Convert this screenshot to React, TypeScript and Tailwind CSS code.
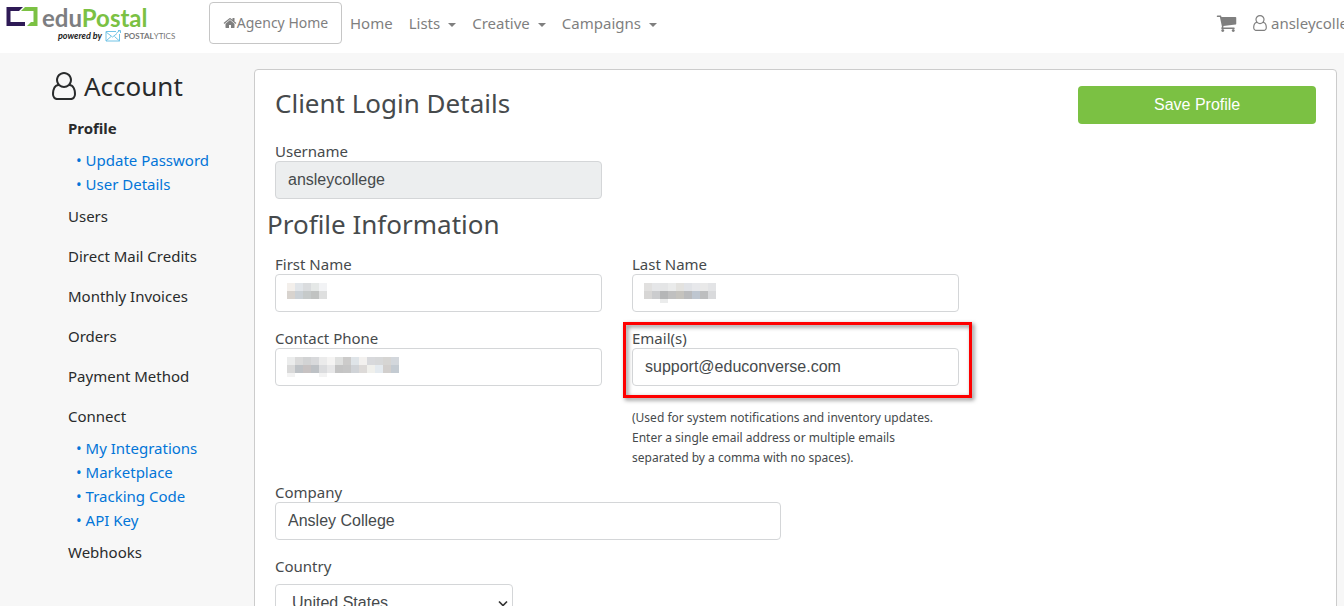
import React, { useState } from 'react';

const HomeIcon = ({ className }: { className?: string }) => (
  <svg className={className} viewBox="0 0 1792 1792" fill="currentColor" aria-hidden="true">
    <path d="M1472 992v480q0 26-19 45t-45 19h-384v-384h-256v384h-384q-26 0-45-19t-19-45v-480q0-1 .5-3t.5-3l575-474 575 474q1 2 1 6zm223-69l-62 74q-8 9-21 11h-3q-13 0-21-7l-692-577-692 577q-12 8-24 7-13-2-21-11l-62-74q-8-10-7-23.5t11-21.5l719-599q32-26 76-26t76 26l244 204v-195q0-14 9-23t23-9h192q14 0 23 9t9 23v408l219 182q10 8 11 21.5t-7 23.5z" />
  </svg>
);

const CartIcon = ({ className }: { className?: string }) => (
  <svg className={className} viewBox="64 128 1664 1536" fill="currentColor" aria-hidden="true">
    <path d="M704 1536q0 52-38 90t-90 38-90-38-38-90 38-90 90-38 90 38 38 90zm896 0q0 52-38 90t-90 38-90-38-38-90 38-90 90-38 90 38 38 90zm128-1088v512q0 24-16.5 42.5t-40.5 21.5l-1044 122q13 60 13 70 0 16-24 64h920q26 0 45 19t19 45-19 45-45 19h-1024q-26 0-45-19t-19-45q0-11 8-31.5t16-36 21.5-40 15.5-29.5l-177-823h-204q-26 0-45-19t-19-45 19-45 45-19h256q16 0 28.5 6.5t19.5 15.5 13 24.5 8 26 5.5 29.5 4.5 26h1201q26 0 45 19t19 45z" />
  </svg>
);

const UserIcon = ({ className }: { className?: string }) => (
  <svg className={className} viewBox="0 0 1536 1792" fill="currentColor" aria-hidden="true">
    <path d="M1201 784q47 14 89.5 38t89 79.5 79.5 115.5 55 172 22 236.5q0 154-100 263.5t-241 109.5h-854q-141 0-241-109.5t-100-263.5q0-131 22-236.5t55-172 79.5-115.5 89-79.5 89.5-38q-79-125-79-272 0-104 40.5-198.5t109.5-163.5 163.5-109.5 198.5-40.5 198.5 40.5 163.5 109.5 109.5 163.5 40.5 198.5q0 147-79 272zm-433-656q-159 0-271.5 112.5t-112.5 271.5 112.5 271.5 271.5 112.5 271.5-112.5 112.5-271.5-112.5-271.5-271.5-112.5zm427 1536q88 0 150.5-71.5t62.5-173.5q0-239-78.5-377t-225.5-145q-145 127-336 127t-336-127q-147 7-225.5 145t-78.5 377q0 102 62.5 173.5t150.5 71.5h854z" />
  </svg>
);

const Logo = () => (
  <a href="#" className="flex w-[202px] shrink-0 gap-1 pt-[6px] pl-[6px]">
    <svg className="h-[21px] w-8 shrink-0" viewBox="0 0 32 21" aria-hidden="true">
      <path d="M0.500 1H17L13 5H4.500V16H19V20H0.500Z" fill="#2e1a56" />
      <path d="M19 1H31.500V20H21L25 16H27.500V5H15Z" fill="#7bc143" />
    </svg>
    <span className="flex flex-col">
      <span className="font-[Lato,sans-serif] text-2xl leading-6 font-bold text-[#7d7e81]">
        edu<span className="text-[#7bc143]">Postal</span>
      </span>
      <span className="flex items-center gap-[3px] pl-4 leading-3 whitespace-nowrap">
        <span className="font-[Lato,sans-serif] text-[9px] font-bold text-[#222222] italic">powered by</span>
        <svg className="h-3 w-4 shrink-0" viewBox="0 0 16 12" fill="none" stroke="#72c4e6" aria-hidden="true">
          <path d="M11 1.500H1V11H14.500V4M1 2L7.500 7L12 3.500M1 11L6 6.500M14.500 11L9.500 6.500" />
          <path d="M11.500 3L15 0.500M13 0.500H15.500V3" />
        </svg>
        <span className="font-[Lato,sans-serif] text-[8px] text-[#777777]">
          <b>POSTAL</b>YTICS
        </span>
      </span>
    </span>
  </a>
);

const NAV_MENUS = ['Lists', 'Creative', 'Campaigns'];

const Header = () => (
  <header className="flex h-[53px] shrink-0 items-start overflow-hidden bg-white text-[15px] text-[#7f7f7f]">
    <Logo />
    <nav className="flex items-center gap-4 pt-[2px] pl-[7px]">
      <div className="flex items-center gap-2">
        <a href="#" className="flex h-[42px] w-[133px] items-center justify-center rounded border border-[#c6c6c6] text-sm">
          <HomeIcon className="h-[14px] w-[14px]" />
          Agency Home
        </a>
        <a href="#">Home</a>
      </div>
      {NAV_MENUS.map((menu) => (
        <button key={menu} type="button" className="flex items-center gap-2">
          {menu}
          <span className="mt-1 border-x-4 border-t-4 border-x-transparent border-t-current" />
        </button>
      ))}
    </nav>
    <div className="ml-auto flex h-[46px] w-32 items-center gap-4 overflow-hidden whitespace-nowrap">
      <a href="#" aria-label="Cart" className="shrink-0">
        <CartIcon className="h-[18px] w-[21px]" />
      </a>
      <a href="#" className="flex shrink-0 items-center gap-1">
        <UserIcon className="h-4 w-[14px]" />
        ansleycollege
      </a>
    </div>
  </header>
);

interface MenuItem {
  label: string;
  active?: boolean;
  children?: string[];
}

const MENU: MenuItem[] = [
  { label: 'Profile', active: true, children: ['Update Password', 'User Details'] },
  { label: 'Users' },
  { label: 'Direct Mail Credits' },
  { label: 'Monthly Invoices' },
  { label: 'Orders' },
  { label: 'Payment Method' },
  { label: 'Connect', children: ['My Integrations', 'Marketplace', 'Tracking Code', 'API Key'] },
  { label: 'Webhooks' },
];

const Sidebar = () => (
  <aside className="w-[254px] shrink-0 pt-4 text-[15px] leading-6 text-[#292b2c]">
    <h2 className="flex items-center gap-2 pl-[52px] text-[26px] leading-[34px]">
      <UserIcon className="h-7 w-6" />
      Account
    </h2>
    <ul className="flex flex-col gap-4 pt-[13px] pl-[68px]">
      {MENU.map((item) => (
        <li key={item.label} className={item.children ? '-mb-2' : ''}>
          <a href="#" className={item.active ? 'font-bold' : ''}>
            {item.label}
          </a>
          {item.children && (
            <ul className="pt-2 pl-2 text-[#0275d8]">
              {item.children.map((child) => (
                <li key={child}>
                  <a href="#">• {child}</a>
                </li>
              ))}
            </ul>
          )}
        </li>
      ))}
    </ul>
  </aside>
);

const FIRST_NAME_MASK = [
  ['#f3efeb', '#e1e5e9', '#dadcde', '#e5e8e7', '#f2f3f5'],
  ['#d8d3ce', '#cbd1d6', '#c6caca', '#c1c3c2', '#dedfdf'],
];

const LAST_NAME_MASK = [
  ['#e1e0df', '#e5e6e8', '#e4e5e6', '#eaebeb', '#e3e2df', '#e1e3e7', '#e7e8eb', '#e9e9e9', '#e3e4e6'],
  ['#d7d6d5', '#cbccce', '#b5b6b7', '#c0c0c0', '#c5c3be', '#babbbd', '#bec6d0', '#bdbebf', '#d9dadc'],
  ['#ffffff', '#ffffff', '#ebecec'],
];

const PHONE_MASK = [
  ['#ebecec', '#dadada', '#d2d3d4', '#d8d9db', '#ebebeb', '#f5f4f3', '#dfe0df', '#cccbca', '#dfe4e8', '#f3f1ef', '#d8d9dc', '#d7d8d9', '#d6d5d3', '#d3d7dc'],
  ['#d9d9d9', '#bec2c6', '#c7c2c2', '#bdc1c5', '#dbdcde', '#e7e7e8', '#c4c4c4', '#c6c6c6', '#d0d3d7', '#dddad8', '#f0f0ec', '#e4eaef', '#d2cfcd', '#c4cbd2'],
  ['#f3f3f3', '#ffffff', '#ffffff', '#ffffff', '#f3f3f3'],
];

const labelClass = 'block pb-[2px] leading-4';
const inputClass = 'block h-[38px] w-full rounded border border-[#d4d6d8] px-3 font-[Liberation_Sans,Arial,sans-serif] text-base text-[#464a4c]';

interface FieldProps {
  id: string;
  label: string;
  value?: string;
  mask?: string[][];
  disabled?: boolean;
  className?: string;
  children?: React.ReactNode;
}

const Field = ({ id, label, value = '', mask, disabled, className = '', children }: FieldProps) => {
  const [text, setText] = useState(value);

  return (
    <div className={className}>
      <div className="relative">
        <label htmlFor={id} className={labelClass}>{label}</label>
        <div className="relative">
          <input
            id={id}
            type="text"
            value={text}
            disabled={disabled}
            onChange={(e) => setText(e.target.value)}
            className={`${inputClass} ${disabled ? 'bg-[#eceeef]' : 'bg-white'}`}
          />
          {/* Redacted value */}
          {mask && (
            <div className="pointer-events-none absolute top-[9px] left-3">
              {mask.map((row, i) => (
                <div key={i} className={`flex overflow-hidden ${i === 2 ? 'h-1' : 'h-2'}`}>
                  {row.map((color, j) => (
                    <span key={j} className="h-2 w-2" style={{ backgroundColor: color }} />
                  ))}
                </div>
              ))}
            </div>
          )}
        </div>
        {/* Callout frame goes over the label and the input */}
        {id === 'email' && (
          <div className="pointer-events-none absolute -top-2 -right-[13px] -bottom-3 -left-[9px] border-3 border-[#fe0000] drop-shadow-[2px_2px_2px_rgba(0,0,0,0.5)]" />
        )}
      </div>
      {children}
    </div>
  );
};

const App: React.FC = () => {
  const [country, setCountry] = useState('United States');

  return (
    <div className="flex h-screen flex-col overflow-hidden bg-[#f7f7f7] font-[Noto_Sans,sans-serif]">
      <Header />
      <div className="flex flex-1">
        <Sidebar />
        <main className="mt-4 mr-[7px] min-w-0 flex-1">
          <form
            className="rounded border border-[#cccccc] bg-white px-5 py-4 text-[15px] text-[#464a4c]"
            onSubmit={(e) => e.preventDefault()}
          >
            <div className="grid grid-cols-12 gap-x-[30px]">
              <h2 className="col-span-9 text-[26px] leading-[34px]">Client Login Details</h2>
              <button type="submit" className="col-span-3 h-[38px] rounded bg-[#7bc143] font-[Liberation_Sans,Arial,sans-serif] text-base text-white">
                Save Profile
              </button>
              <Field id="username" label="Username" value="ansleycollege" disabled className="col-span-4 mt-[19px]" />
            </div>

            <h2 className="mt-2 -ml-2 text-[26px] leading-[34px]">Profile Information</h2>

            <div className="mt-[15px] grid grid-cols-12 gap-x-[30px] gap-y-[18px]">
              <Field id="first-name" label="First Name" mask={FIRST_NAME_MASK} className="col-span-4" />
              <Field id="last-name" label="Last Name" mask={LAST_NAME_MASK} className="col-span-4" />
              <Field id="phone" label="Contact Phone" mask={PHONE_MASK} className="col-span-4 col-start-1" />
              <Field id="email" label="Email(s)" value="support@educonverse.com" className="col-span-4">
                <p className="mt-[22px] -mb-[2px] text-xs leading-5">
                  (Used for system notifications and inventory updates.
                  <br />
                  Enter a single email address or multiple emails
                  <br />
                  separated by a comma with no spaces).
                </p>
              </Field>
              <Field id="company" label="Company" value="Ansley College" className="col-span-6 col-start-1" />
              <div className="col-span-3 col-start-1">
                <label htmlFor="country" className={labelClass}>Country</label>
                <div className="relative mt-2">
                  <select
                    id="country"
                    value={country}
                    onChange={(e) => setCountry(e.target.value)}
                    className="block h-[38px] w-full appearance-none rounded border border-[#d4d6d8] bg-white px-4 font-[Liberation_Sans,Arial,sans-serif] text-base text-[#464a4c]"
                  >
                    <option>United States</option>
                    <option>Canada</option>
                  </select>
                  <svg className="pointer-events-none absolute top-4 right-1 h-2 w-3" viewBox="0 0 12 8" fill="none" stroke="#333333" strokeWidth="1.700" aria-hidden="true">
                    <path d="M2 1.500L6 5.500L10 1.500" />
                  </svg>
                </div>
              </div>
            </div>
          </form>
        </main>
      </div>
    </div>
  );
};

export default App;
